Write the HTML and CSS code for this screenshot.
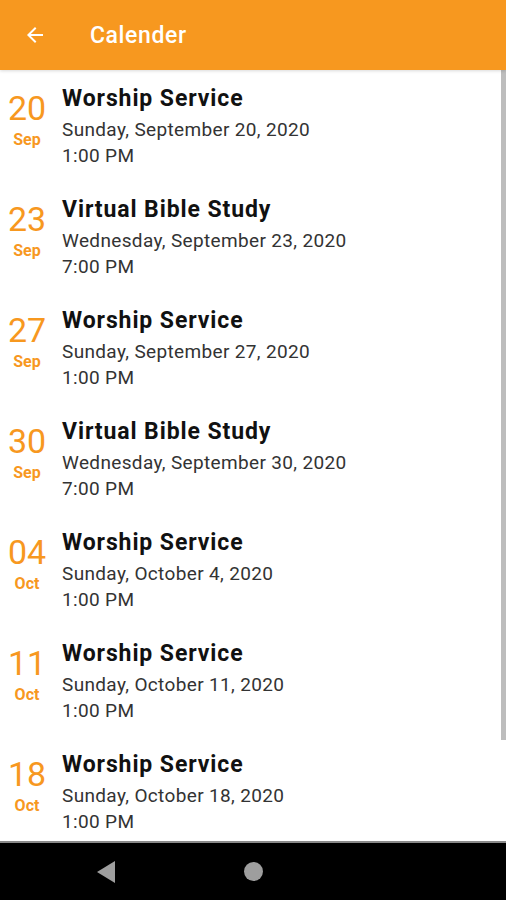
FILE: index.html
```html
<!DOCTYPE html>
<html lang="en">
<head>
    <meta charset="UTF-8">
    <meta name="viewport" content="width=device-width, initial-scale=1.0">
    <title>Calender</title>
    <link rel="stylesheet" href="styles.css">
</head>
<body>
    <div class="screen">
        <header class="app-bar">
            <svg class="back" width="24" height="24" viewBox="0 0 24 24">
                <path d="M20 11H7.83l5.59-5.59L12 4l-8 8 8 8 1.41-1.41L7.83 13H20v-2z" fill="#fff"/>
            </svg>
            <h1>Calender</h1>
        </header>

        <div class="list">
            <div class="event">
                <div class="date"><span class="day">20</span><span class="month">Sep</span></div>
                <div class="info">
                    <div class="title">Worship Service</div>
                    <div class="line">Sunday, September 20, 2020</div>
                    <div class="line">1:00 PM</div>
                </div>
            </div>
            <div class="event">
                <div class="date"><span class="day">23</span><span class="month">Sep</span></div>
                <div class="info">
                    <div class="title">Virtual Bible Study</div>
                    <div class="line">Wednesday, September 23, 2020</div>
                    <div class="line">7:00 PM</div>
                </div>
            </div>
            <div class="event">
                <div class="date"><span class="day">27</span><span class="month">Sep</span></div>
                <div class="info">
                    <div class="title">Worship Service</div>
                    <div class="line">Sunday, September 27, 2020</div>
                    <div class="line">1:00 PM</div>
                </div>
            </div>
            <div class="event">
                <div class="date"><span class="day">30</span><span class="month">Sep</span></div>
                <div class="info">
                    <div class="title">Virtual Bible Study</div>
                    <div class="line">Wednesday, September 30, 2020</div>
                    <div class="line">7:00 PM</div>
                </div>
            </div>
            <div class="event">
                <div class="date"><span class="day">04</span><span class="month">Oct</span></div>
                <div class="info">
                    <div class="title">Worship Service</div>
                    <div class="line">Sunday, October 4, 2020</div>
                    <div class="line">1:00 PM</div>
                </div>
            </div>
            <div class="event">
                <div class="date"><span class="day">11</span><span class="month">Oct</span></div>
                <div class="info">
                    <div class="title">Worship Service</div>
                    <div class="line">Sunday, October 11, 2020</div>
                    <div class="line">1:00 PM</div>
                </div>
            </div>
            <div class="event">
                <div class="date"><span class="day">18</span><span class="month">Oct</span></div>
                <div class="info">
                    <div class="title">Worship Service</div>
                    <div class="line">Sunday, October 18, 2020</div>
                    <div class="line">1:00 PM</div>
                </div>
            </div>
            <div class="scrollbar"></div>
        </div>

        <nav class="nav-bar">
            <svg width="18" height="22" viewBox="0 0 18 22">
                <path d="M18 0 L0 11 L18 22 Z" fill="#9e9e9e"/>
            </svg>
            <svg width="19" height="19" viewBox="0 0 19 19">
                <circle cx="9.5" cy="9.5" r="9.5" fill="#9e9e9e"/>
            </svg>
            <span class="nav-spacer"></span>
        </nav>
    </div>
</body>
</html>
```

FILE: styles.css
```css
body {
    margin: 0;
    font-family: Roboto, "Noto Sans", sans-serif;
    background: #fff;
}

.screen {
    width: 506px;
    height: 900px;
    display: flex;
    flex-direction: column;
    overflow: hidden;
}

.app-bar {
    height: 70px;
    flex-shrink: 0;
    background: #f7981f;
    display: flex;
    align-items: center;
    padding-left: 23px;
    box-shadow: 0 1px 3px rgba(0, 0, 0, 0.15);
    position: relative;
    z-index: 1;
}

.back {
    width: 24px;
    height: 24px;
}

.app-bar h1 {
    margin: 0 0 0 43px;
    color: #fff;
    font-size: 23px;
    font-weight: 500;
    letter-spacing: 0.6px;
}

.list {
    flex: 1;
    min-height: 0;
    overflow: hidden;
    position: relative;
    padding-top: 14px;
}

.event {
    height: 111px;
    display: flex;
}

.date {
    width: 54px;
    padding-top: 4px;
    display: flex;
    flex-direction: column;
    align-items: center;
    color: #f7981f;
}

.day {
    font-size: 34px;
    line-height: 40px;
}

.month {
    font-size: 16px;
    font-weight: 700;
    line-height: 18px;
    margin-top: 3px;
}

.info {
    padding-left: 8px;
}

.title {
    font-size: 23px;
    font-weight: 700;
    color: #111;
    line-height: 30px;
    letter-spacing: 0.9px;
    margin-bottom: 3px;
}

.line {
    font-size: 19px;
    color: #333;
    line-height: 26px;
    letter-spacing: 0.35px;
}

.scrollbar {
    position: absolute;
    top: 0;
    right: 0;
    width: 5px;
    height: 670px;
    background: #bdbdbd;
}

.nav-bar {
    height: 57px;
    flex-shrink: 0;
    background: #000;
    border-top: 2px solid #8a8a8a;
    display: flex;
    align-items: center;
    justify-content: center;
    gap: 129px;
}

.nav-spacer {
    width: 18px;
}
```
